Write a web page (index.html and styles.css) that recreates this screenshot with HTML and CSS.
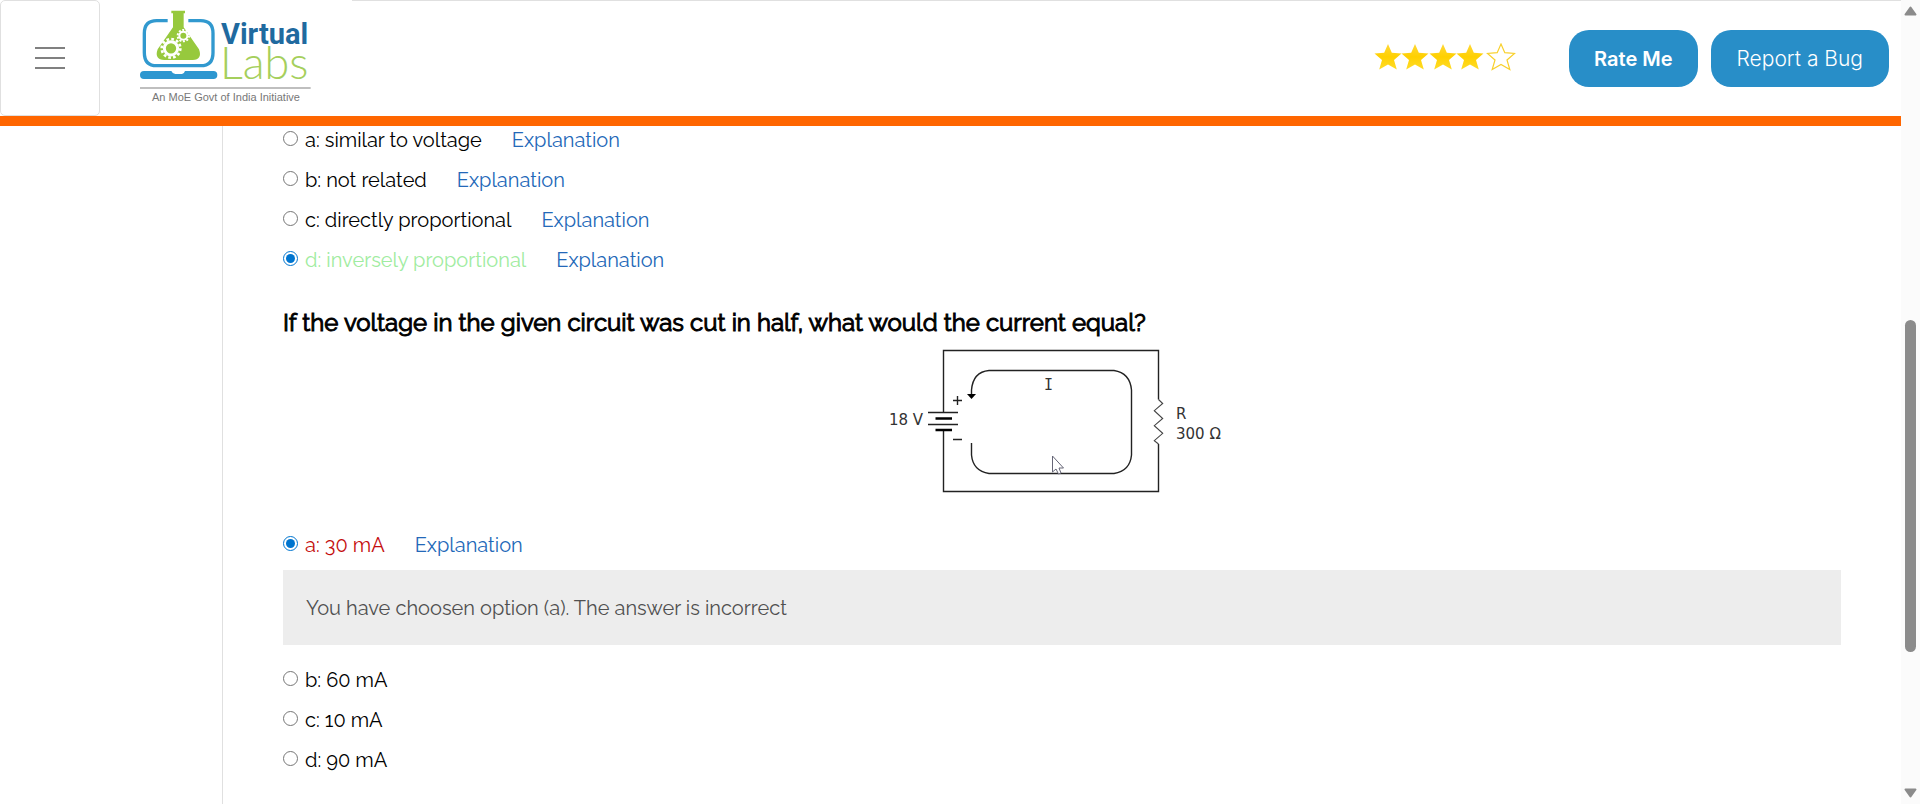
FILE: index.html
```html
<!DOCTYPE html>
<html lang="en">
<head>
<meta charset="utf-8">
<meta name="viewport" content="width=device-width, initial-scale=1">
<title>Virtual Labs</title>
<link rel="stylesheet" href="styles.css">
</head>
<body>
<div class="window">
  <div class="page">
    <header class="header">
      <button class="menu" type="button" aria-label="Menu"><span class="menu-bar"></span><span class="menu-bar"></span><span class="menu-bar"></span></button>
      <a class="logo" href="#" aria-label="Virtual Labs">
        <svg width="174" height="94" viewBox="0 0 174 94">
          <svg width="174" height="94" viewBox="417 30 522 282">
            <path d="M503 62H470Q433 62 433 100V158Q433 197 470 197H602Q639 197 639 158V100Q639 62 602 62H565" fill="none" stroke="#3199cf" stroke-width="10"/>
            <path d="M432 213H514Q518 222 526 222H546Q552 222 555 213H640Q652 213 652 225Q652 237 640 237H432Q420 237 420 225Q420 213 432 213Z" fill="#2d97d0"/>
            <path d="M514 32H555V40H551V82L597 148Q608 179 578 180H493Q462 179 473 148L519 82V40H514Z" fill="#97c93d"/>
            <g fill="none" stroke="#fff">
              <circle cx="513" cy="145" r="20" stroke-width="9"/>
              <circle cx="513" cy="145" r="28" stroke-width="8" stroke-dasharray="8 6.66"/>
              <circle cx="550" cy="107" r="12" stroke-width="6"/>
              <circle cx="550" cy="107" r="17" stroke-width="6" stroke-dasharray="6 4.68"/>
            </g>
            <path d="M420 264H932" stroke="#aaa" stroke-width="5"/>
          </svg>
          <text class="logo-virtual" x="82" y="34">Virtual</text>
          <text class="logo-labs" x="81" y="69">Labs</text>
          <text class="logo-tag" x="87" y="91" text-anchor="middle">An MoE Govt of India Initiative</text>
        </svg>
      </a>
      <div class="actions">
        <svg class="stars" role="img" aria-label="4 of 5 stars" width="142" height="28" viewBox="0 0 142 28">
          <defs>
            <linearGradient id="gold" x1="0" y1="0" x2="0" y2="1"><stop offset="0" stop-color="#ffd83a"/><stop offset=".5" stop-color="#ffd000"/><stop offset="1" stop-color="#ffdc28"/></linearGradient>
            <path id="star" d="M14 1L17.8 9.700L27.5 10.500L20 17L22.800 26.500L14 21.500L5.200 26.500L8 17L.5 10.500L10.200 9.700Z"/>
          </defs>
          <g fill="url(#gold)"><use href="#star"/><use href="#star" x="27"/><use href="#star" x="55"/><use href="#star" x="82"/></g>
          <use href="#star" x="113" fill="#fff" stroke="#f8d02c" stroke-width="1.2"/>
        </svg>
        <button class="button button-strong" type="button">Rate Me</button>
        <button class="button" type="button">Report a Bug</button>
      </div>
    </header>
    <div class="body">
      <aside class="sidebar"></aside>
      <main class="content">
        <div class="answers">
          <div class="answer"><input type="radio" name="q1" id="q1a"><label for="q1a">a: similar to voltage</label><a href="#">Explanation</a></div>
          <div class="answer"><input type="radio" name="q1" id="q1b"><label for="q1b">b: not related</label><a href="#">Explanation</a></div>
          <div class="answer"><input type="radio" name="q1" id="q1c"><label for="q1c">c: directly proportional</label><a href="#">Explanation</a></div>
          <div class="answer correct"><input type="radio" name="q1" id="q1d" checked><label for="q1d">d: inversely proportional</label><a href="#">Explanation</a></div>
        </div>
        <h2 class="question">If the voltage in the given circuit was cut in half, what would the current equal?</h2>
        <svg class="circuit" role="img" aria-label="Circuit with an 18 V battery and a 300 ohm resistor" width="346" height="156" viewBox="0 0 346 156">
          <g fill="none" stroke="#222" stroke-width="1.4">
            <path d="M54.5 69V6.5H269.5V55.5M269.5 100V147.5H54.5V86"/>
            <path d="M269.5 55.5L273.7 59.5L265.3 66.7L273.7 74.5L265.3 81.7L273.7 89.3L265.3 96.7L269.5 100" stroke="#444" stroke-width="1.1"/>
            <path d="M39 68.5H69M39 80.5H69"/>
            <path d="M46.500 74.5H63M46.500 86H63" stroke="#000" stroke-width="2.6"/>
            <path d="M82.500 52V46Q84 28 100 26.500H225Q241 29 242.500 46V111Q241 127 225 129.500H100Q84 127 82.500 111V99"/>
            <path d="M64 56.500H73M68.500 52V61M64 95.500H73"/>
          </g>
          <path d="M78 50H87L82.500 55Z"/>
          <g class="circuit-text">
            <text x="0" y="81">18 V</text>
            <text class="circuit-mono" x="155" y="46">I</text>
            <text x="287" y="75">R</text>
            <text x="287" y="95">300 Ω</text>
          </g>
          <path d="M163.500 112V128L167 125L169.500 130L172 129L170 124H174.500Z" fill="#fff" stroke="#667" stroke-width="1"/>
        </svg>
        <div class="answers">
          <div class="answer wrong"><input type="radio" name="q2" id="q2a" checked><label for="q2a">a: 30 mA</label><a href="#">Explanation</a></div>
        </div>
        <p class="feedback">You have choosen option (a). The answer is incorrect</p>
        <div class="answers">
          <div class="answer"><input type="radio" name="q2" id="q2b"><label for="q2b">b: 60 mA</label></div>
          <div class="answer"><input type="radio" name="q2" id="q2c"><label for="q2c">c: 10 mA</label></div>
          <div class="answer"><input type="radio" name="q2" id="q2d"><label for="q2d">d: 90 mA</label></div>
        </div>
      </main>
    </div>
  </div>
  <div class="scrollbar" aria-hidden="true">
    <svg width="13" height="10" viewBox="0 0 13 10"><path d="M6.500 1.500L11.500 8.500H1.500Z" fill="#8b8b8b" stroke="#8b8b8b" stroke-width="2" stroke-linejoin="round"/></svg>
    <div class="track"><div class="thumb"></div></div>
    <svg width="13" height="10" viewBox="0 0 13 10"><path d="M6.500 8.500L11.500 1.500H1.500Z" fill="#8b8b8b" stroke="#8b8b8b" stroke-width="2" stroke-linejoin="round"/></svg>
  </div>
</div>
</body>
</html>
```
FILE: styles.css
```css
* { box-sizing: border-box; }

body {
  margin: 0;
  background: #fff;
  color: #000;
  font-family: Raleway, Lato, sans-serif;
  font-size: 20px;
  line-height: 28px;
}

.window { display: flex; min-height: 100vh; }
.page { flex: 1; display: flex; flex-direction: column; }

.header {
  display: flex;
  align-items: center;
  border-bottom: 10px solid #ff6600;
}

.menu {
  display: flex;
  flex-direction: column;
  align-items: center;
  justify-content: center;
  gap: 8px;
  width: 100px;
  height: 116px;
  padding: 0;
  border: 1px solid #e0e0e0;
  border-radius: 5px;
  background: #fff;
}
.menu-bar { width: 30px; height: 2px; background: #808080; }

.logo { display: flex; padding: 0 39px 2px; }
.logo-virtual { font: 700 29px Roboto, sans-serif; fill: #1f6a9f; }
.logo-labs { font: 300 45px Lato, sans-serif; fill: #a5cf5c; }
.logo-tag { font: 11px "Liberation Sans", sans-serif; fill: #777; }

.actions {
  flex: 1;
  align-self: stretch;
  display: flex;
  align-items: center;
  justify-content: flex-end;
  gap: 13px;
  padding-right: 12px;
  border-top: 1px solid #e0e0e0;
}
.stars { margin: 0 40px 4px 0; }

.button {
  height: 57px;
  padding: 0 26px;
  border: 0;
  border-radius: 20px;
  background: #288ec8;
  color: #fff;
  font: 300 21px Inter, sans-serif;
}
.button-strong { padding: 0 25px; font-size: 20px; font-weight: 600; }

.body { flex: 1; display: flex; }
.sidebar { width: 223px; border-right: 1px solid #e0e0e0; }
.content {
  flex: 1;
  display: flex;
  flex-direction: column;
  padding: 0 60px 30px;
}

.answers { display: flex; flex-direction: column; gap: 12px; }
.answer { display: flex; align-items: center; }
.answer input {
  width: 15px;
  height: 15px;
  margin: 0 7px 3px 0;
  accent-color: #0075cf;
}
.answer a { margin-left: 30px; color: #2368b8; text-decoration: none; }
.correct label { color: #a0eca0; }
.wrong label { color: #c40d0d; }

.question {
  margin: 35px 0 7px;
  font-size: 24px;
  font-weight: 400;
  line-height: 28px;
  -webkit-text-stroke: 1px #000;
}

.circuit { align-self: center; margin-bottom: 31px; }
.circuit-text { font: 15px "DejaVu Sans", sans-serif; fill: #333; }
.circuit-mono { font-family: "DejaVu Sans Mono", monospace; }

.feedback {
  margin: 11px 0 21px;
  padding: 24px 23px 23px;
  background: #ededed;
  color: #505050;
}

.scrollbar {
  display: flex;
  flex-direction: column;
  align-items: center;
  width: 19px;
  padding: 6px 0;
  background: #fbfbfb;
}
.track { flex: 1; display: flex; flex-direction: column; align-items: center; padding-top: 304px; }
.thumb { width: 11px; height: 332px; border-radius: 6px; background: #8b8b8b; }
```
